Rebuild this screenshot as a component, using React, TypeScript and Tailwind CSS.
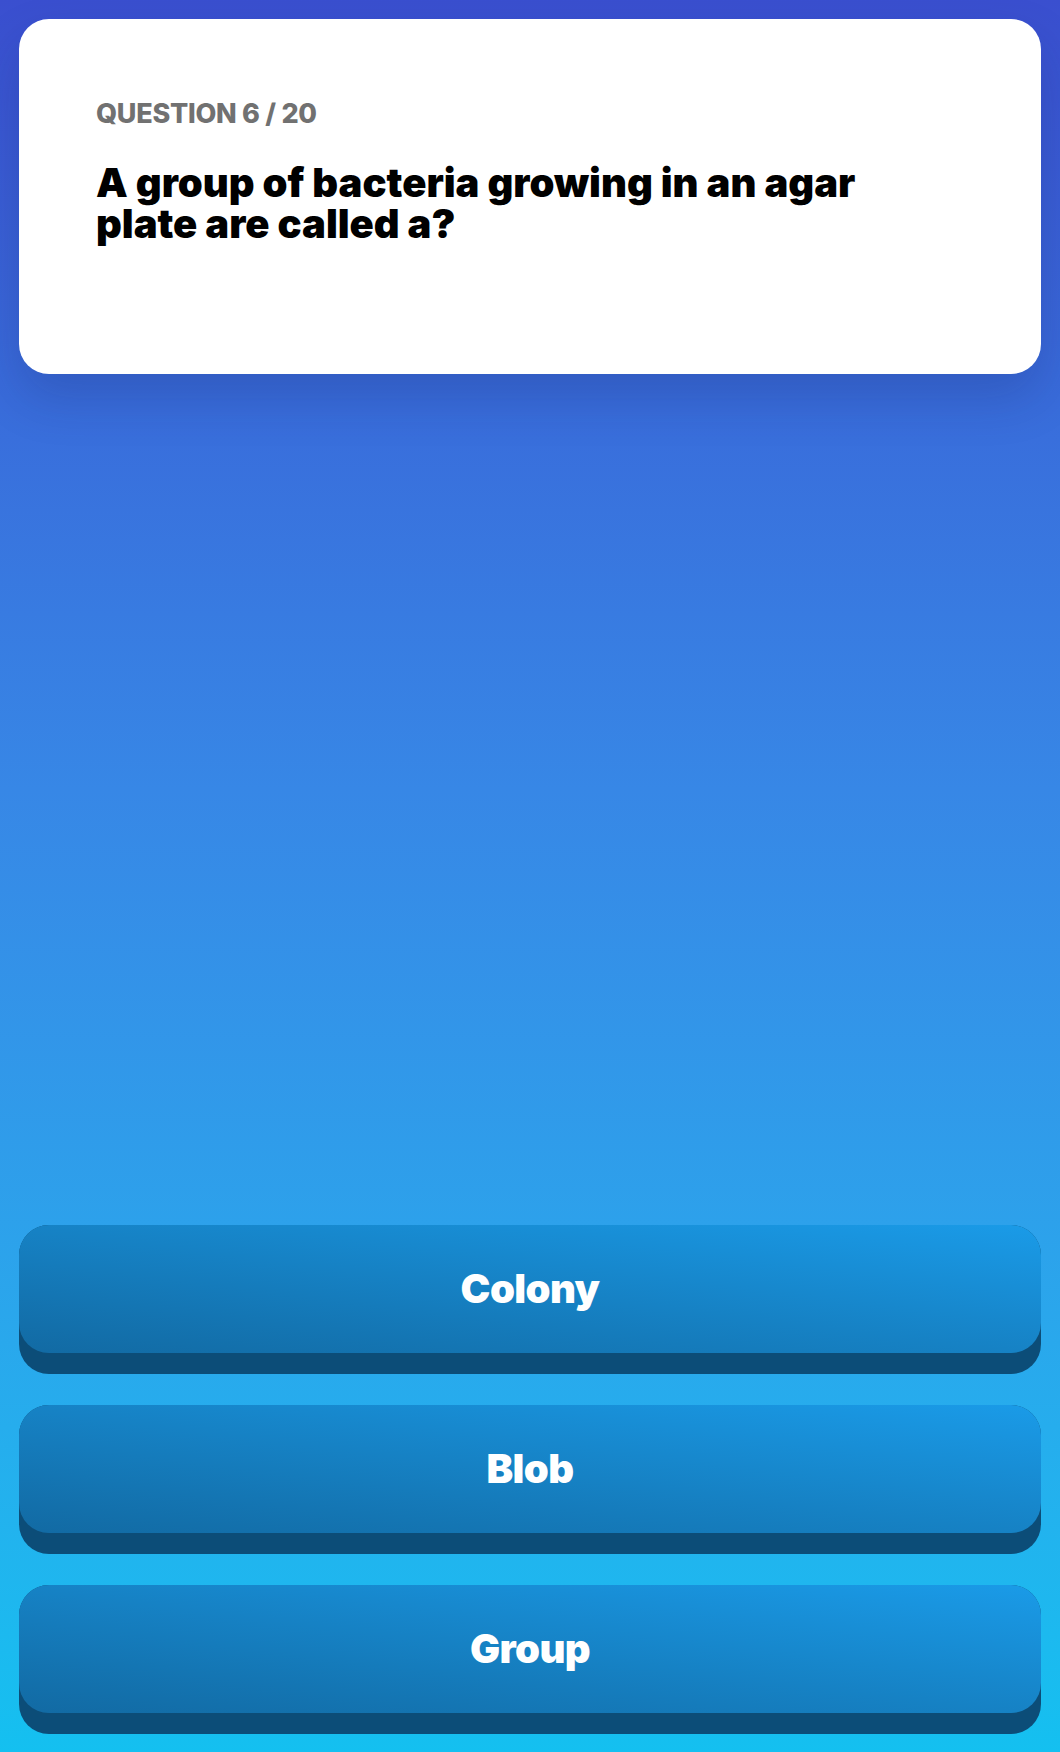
const answers = ["Colony", "Blob", "Group"];

function AnswerButton({ label }: { label: string }) {
  return (
    <button
      type="button"
      className="block w-full rounded-[30px] bg-[#0c4d78] pb-[21px] text-left"
    >
      <div className="flex h-[128px] items-center justify-center rounded-[30px] bg-linear-to-tr from-[#126aa3] to-[#1a9be8]">
        <span className="font-['Inter'] text-[40px] leading-none font-black tracking-[-0.015em] text-white">
          {label}
        </span>
      </div>
    </button>
  );
}

export default function App() {
  return (
    <div className="flex min-h-[1752px] flex-col bg-linear-to-b from-[#3a4fcf] via-[#3787e6] via-45% to-[#14c0f0] px-[19px] pt-[19px] pb-[18px]">
      <div className="h-[355px] rounded-[30px] bg-white px-[77px] pt-[80px] shadow-[0_24px_50px_rgba(20,30,90,0.2)]">
        <p className="font-['Inter'] text-[27px] leading-[30px] font-extrabold tracking-[-0.01em] text-[#717171] uppercase">
          Question 6 / 20
        </p>
        <h1 className="mt-[33px] max-w-[810px] font-['Inter'] text-[40px] leading-[41px] font-black tracking-normal text-black">
          A group of bacteria growing in an agar plate are called a?
        </h1>
      </div>

      <div className="flex-1" />

      <div className="flex flex-col gap-[31px]">
        {answers.map((a) => (
          <AnswerButton key={a} label={a} />
        ))}
      </div>
    </div>
  );
}
